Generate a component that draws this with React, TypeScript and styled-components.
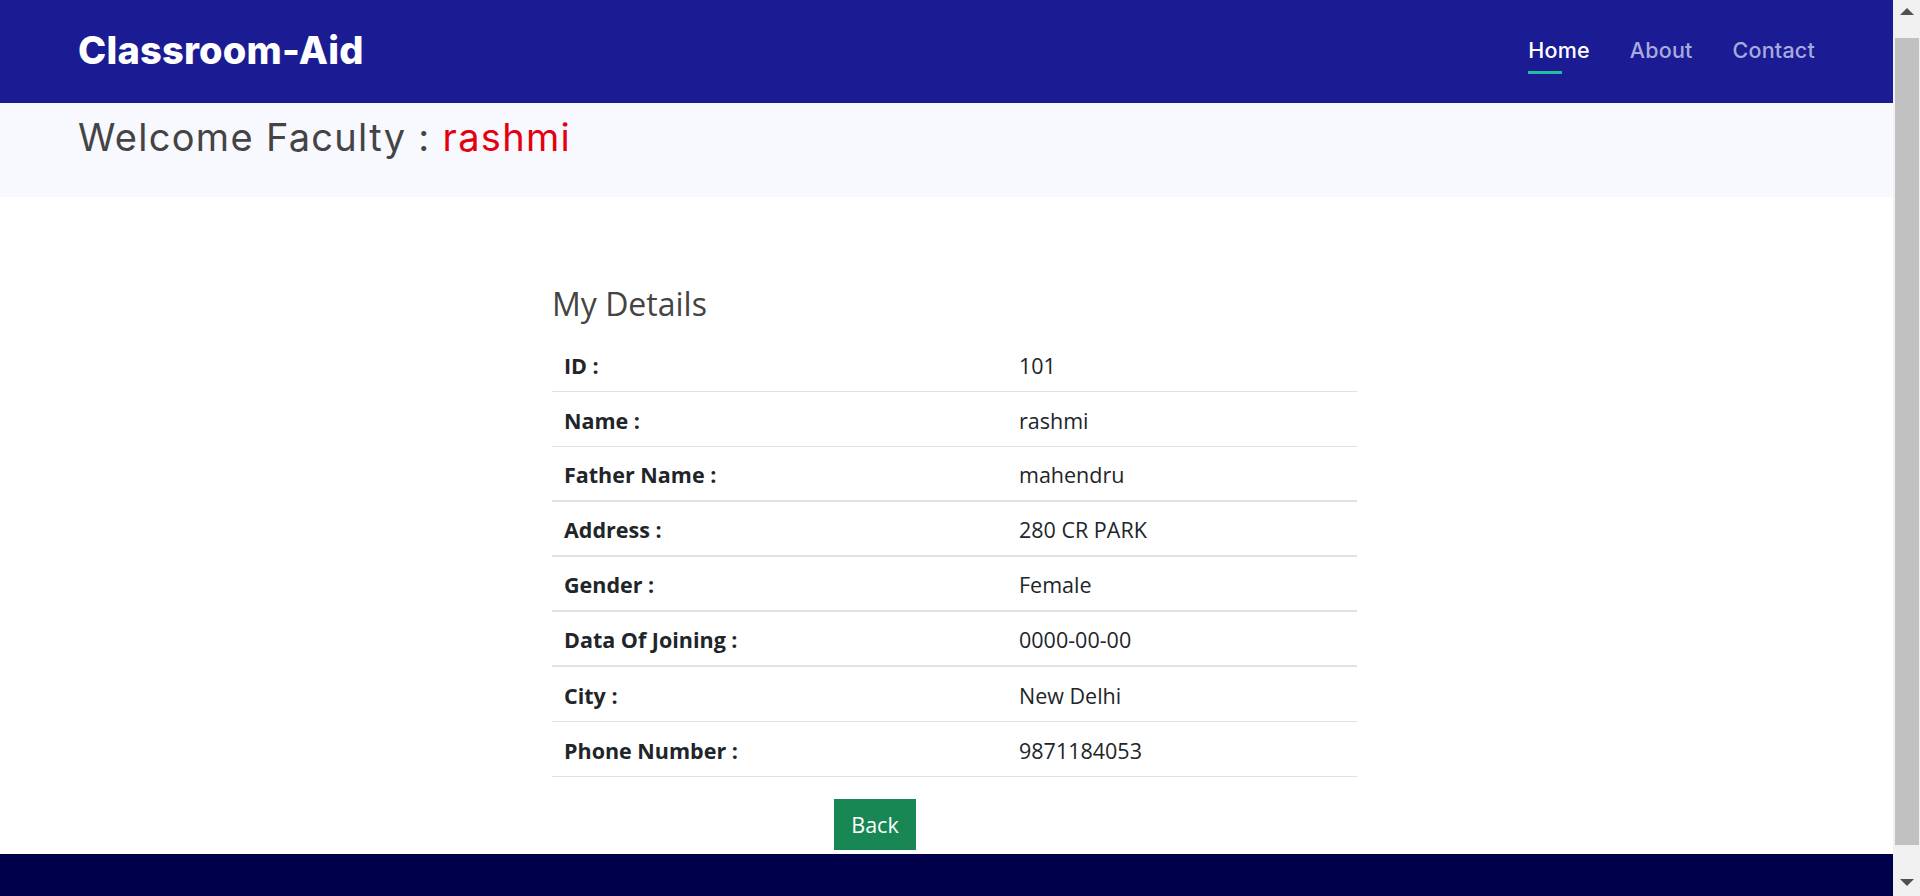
import React from 'react';
import styled, { createGlobalStyle } from 'styled-components';

const GlobalStyle = createGlobalStyle`
  html, body {
    margin: 0;
    height: 100%;
    overflow: hidden;
  }
  body {
    background: #fff;
    font-family: 'Open Sans', 'Liberation Sans', sans-serif;
  }
`;

// Window frame: scrolling page plus the browser scrollbar beside it
const Shell = styled.div`
  display: flex;
  height: 100vh;
  overflow: hidden;
`;

const Page = styled.div`
  flex: 1;
  min-width: 0;
  overflow-y: auto;
  scrollbar-width: none;

  &::-webkit-scrollbar {
    display: none;
  }
`;

const ScrollTrack = styled.div`
  width: 27px;
  flex-shrink: 0;
  display: flex;
  flex-direction: column;
  background: #f1f1f1;
`;

const ScrollArrow = styled.div<{ $down?: boolean }>`
  height: 34px;
  flex-shrink: 0;
  display: flex;
  justify-content: center;
  align-items: ${(p) => (p.$down ? 'flex-end' : 'flex-start')};
  padding: ${(p) => (p.$down ? '0 0 10px' : '8px 0 0')};
  box-sizing: border-box;

  &::before {
    content: '';
    width: 0;
    height: 0;
    border-left: 7px solid transparent;
    border-right: 7px solid transparent;
    ${(p) =>
      p.$down
        ? 'border-top: 7px solid #505050;'
        : 'border-bottom: 7px solid #505050;'}
  }
`;

const ScrollBody = styled.div`
  flex: 1;
  display: flex;
  flex-direction: column;
  padding: 4px 1px 17px 2px;
`;

const ScrollThumb = styled.div`
  flex: 1;
  background: #c1c1c1;
`;

// Header
const Navbar = styled.header`
  box-sizing: border-box;
  height: 103px;
  padding: 0 78px 4px;
  background: #1b1c93;
  display: flex;
  align-items: center;
  justify-content: space-between;
`;

const Brand = styled.a`
  font-family: Inter, 'Liberation Sans', sans-serif;
  font-weight: 800;
  font-size: 38px;
  letter-spacing: 0.2px;
  color: #fff;
  text-decoration: none;
`;

const NavList = styled.nav`
  display: flex;
  align-items: center;
  gap: 40px;
`;

const NavLink = styled.a<{ $active?: boolean }>`
  position: relative;
  font-family: Inter, 'Liberation Sans', sans-serif;
  font-weight: 500;
  font-size: 21.5px;
  letter-spacing: 0.2px;
  color: ${(p) => (p.$active ? '#ffffff' : '#a7aadf')};
  text-decoration: none;

  &::after {
    content: '';
    display: ${(p) => (p.$active ? 'block' : 'none')};
    position: absolute;
    left: 0;
    top: calc(100% + 8px);
    width: 34px;
    height: 3px;
    background: #1fbfa0;
  }
`;

// Welcome band
const WelcomeBand = styled.section`
  box-sizing: border-box;
  height: 94px;
  padding: 12px 78px 0;
  background: #f8f8ff;
`;

const WelcomeText = styled.h2`
  margin: 0;
  font-family: Inter, 'Liberation Sans', sans-serif;
  font-weight: 400;
  font-size: 38px;
  line-height: 1.2;
  letter-spacing: 1.3px;
  color: #444;
`;

const Highlight = styled.span`
  color: #e3000f;
`;

// Details
const Main = styled.main`
  display: flex;
  justify-content: center;
  padding: 88px 0 0 16px;
`;

const DetailsCard = styled.div`
  width: 805px;
`;

const Heading = styled.h3`
  margin: 0 0 15px;
  font-family: 'Open Sans', sans-serif;
  font-weight: 400;
  font-size: 32px;
  line-height: 1.17;
  color: #444;
`;

const Row = styled.div<{ $thick?: boolean }>`
  display: grid;
  grid-template-columns: 455px 1fr;
  align-items: center;
  height: ${(p) => (p.$thick ? 53 : 54)}px;
  border-bottom: ${(p) => (p.$thick ? 2 : 1)}px solid #dee2e6;
`;

const Cell = styled.div<{ $label?: boolean }>`
  padding: 2px 12px 0;
  font-family: 'Open Sans', sans-serif;
  font-size: 21.5px;
  font-weight: ${(p) => (p.$label ? 700 : 400)};
  color: #212529;
`;

const BackButton = styled.button`
  display: block;
  width: 82px;
  height: 51px;
  margin: 22px 0 0 282px;
  padding: 0;
  border: none;
  border-radius: 0;
  background: #198754;
  color: #fff;
  font-family: 'Open Sans', sans-serif;
  font-size: 21.5px;
  cursor: pointer;
`;

const Footer = styled.footer`
  height: 74px;
  margin-top: 4px;
  background: #00004a;
`;

const details: { label: string; value: string; thick?: boolean }[] = [
  { label: 'ID :', value: '101' },
  { label: 'Name :', value: 'rashmi' },
  { label: 'Father Name :', value: 'mahendru', thick: true },
  { label: 'Address :', value: '280 CR PARK', thick: true },
  { label: 'Gender :', value: 'Female', thick: true },
  { label: 'Data Of Joining :', value: '0000-00-00', thick: true },
  { label: 'City :', value: 'New Delhi' },
  { label: 'Phone Number :', value: '9871184053' },
];

const App: React.FC = () => {
  return (
    <>
      <GlobalStyle />
      <Shell>
        <Page>
          <Navbar>
            <Brand href="#">Classroom-Aid</Brand>
            <NavList>
              <NavLink href="#" $active>Home</NavLink>
              <NavLink href="#">About</NavLink>
              <NavLink href="#">Contact</NavLink>
            </NavList>
          </Navbar>

          <WelcomeBand>
            <WelcomeText>
              Welcome Faculty : <Highlight>rashmi</Highlight>
            </WelcomeText>
          </WelcomeBand>

          <Main>
            <DetailsCard>
              <Heading>My Details</Heading>
              {details.map((d) => (
                <Row key={d.label} $thick={d.thick}>
                  <Cell $label>{d.label}</Cell>
                  <Cell>{d.value}</Cell>
                </Row>
              ))}
              <BackButton>Back</BackButton>
            </DetailsCard>
          </Main>

          <Footer />
        </Page>

        <ScrollTrack>
          <ScrollArrow />
          <ScrollBody>
            <ScrollThumb />
          </ScrollBody>
          <ScrollArrow $down />
        </ScrollTrack>
      </Shell>
    </>
  );
};

export default App;
